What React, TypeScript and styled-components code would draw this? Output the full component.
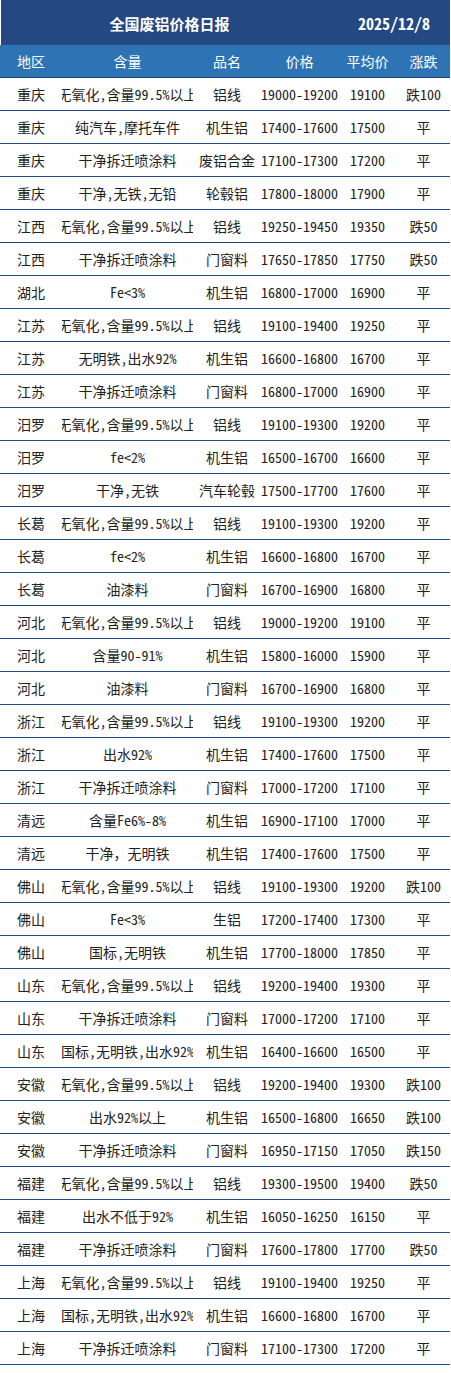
import React from "react";
import styled, { createGlobalStyle } from "styled-components";

const GlobalStyle = createGlobalStyle`
  html, body {
    margin: 0;
    padding: 0;
    background: #ffffff;
  }
  body {
    font-family: "Noto Sans Mono CJK SC", "Noto Sans CJK SC", "Liberation Sans", sans-serif;
  }
`;

const COLS = "62px 131px 68px 77px 59px 53px";

const Sheet = styled.div`
  width: 450px;
  display: flex;
  flex-direction: column;
`;

const TitleBar = styled.div`
  margin-left: 1px;
  height: 45px;
  background: #244882;
  display: grid;
  grid-template-columns: 337px 112px;
  align-items: center;
  color: #ffffff;
  font-weight: 700;
`;

const Title = styled.div`
  text-align: center;
  font-size: 15px;
  font-family: "Noto Sans CJK SC", sans-serif;
  padding-top: 1px;
`;

const DateText = styled.div`
  text-align: center;
  font-size: 16px;
  padding-top: 1px;
`;

const Row = styled.div<{ $head?: boolean }>`
  display: grid;
  grid-template-columns: ${COLS};
  height: 33px;
  box-sizing: border-box;
  border-bottom: 1px solid ${(p) => (p.$head ? "#1f3f78" : "#23467f")};
  background: ${(p) => (p.$head ? "#2e74b5" : "#ffffff")};
  color: ${(p) => (p.$head ? "#ffffff" : "#222222")};
  font-size: 14px;
`;

const Cell = styled.div`
  display: flex;
  align-items: center;
  justify-content: center;
  overflow: hidden;
  white-space: nowrap;
  padding-bottom: 1px;
`;

type Item = [string, string, string, string, string, string];

const rows: Item[] = [
  ["重庆", "无氧化,含量99.5%以上", "铝线", "19000-19200", "19100", "跌100"],
  ["重庆", "纯汽车,摩托车件", "机生铝", "17400-17600", "17500", "平"],
  ["重庆", "干净拆迁喷涂料", "废铝合金", "17100-17300", "17200", "平"],
  ["重庆", "干净,无铁,无铅", "轮毂铝", "17800-18000", "17900", "平"],
  ["江西", "无氧化,含量99.5%以上", "铝线", "19250-19450", "19350", "跌50"],
  ["江西", "干净拆迁喷涂料", "门窗料", "17650-17850", "17750", "跌50"],
  ["湖北", "Fe<3%", "机生铝", "16800-17000", "16900", "平"],
  ["江苏", "无氧化,含量99.5%以上", "铝线", "19100-19400", "19250", "平"],
  ["江苏", "无明铁,出水92%", "机生铝", "16600-16800", "16700", "平"],
  ["江苏", "干净拆迁喷涂料", "门窗料", "16800-17000", "16900", "平"],
  ["汨罗", "无氧化,含量99.5%以上", "铝线", "19100-19300", "19200", "平"],
  ["汨罗", "fe<2%", "机生铝", "16500-16700", "16600", "平"],
  ["汨罗", "干净,无铁", "汽车轮毂", "17500-17700", "17600", "平"],
  ["长葛", "无氧化,含量99.5%以上", "铝线", "19100-19300", "19200", "平"],
  ["长葛", "fe<2%", "机生铝", "16600-16800", "16700", "平"],
  ["长葛", "油漆料", "门窗料", "16700-16900", "16800", "平"],
  ["河北", "无氧化,含量99.5%以上", "铝线", "19000-19200", "19100", "平"],
  ["河北", "含量90-91%", "机生铝", "15800-16000", "15900", "平"],
  ["河北", "油漆料", "门窗料", "16700-16900", "16800", "平"],
  ["浙江", "无氧化,含量99.5%以上", "铝线", "19100-19300", "19200", "平"],
  ["浙江", "出水92%", "机生铝", "17400-17600", "17500", "平"],
  ["浙江", "干净拆迁喷涂料", "门窗料", "17000-17200", "17100", "平"],
  ["清远", "含量Fe6%-8%", "机生铝", "16900-17100", "17000", "平"],
  ["清远", "干净，无明铁", "机生铝", "17400-17600", "17500", "平"],
  ["佛山", "无氧化,含量99.5%以上", "铝线", "19100-19300", "19200", "跌100"],
  ["佛山", "Fe<3%", "生铝", "17200-17400", "17300", "平"],
  ["佛山", "国标,无明铁", "机生铝", "17700-18000", "17850", "平"],
  ["山东", "无氧化,含量99.5%以上", "铝线", "19200-19400", "19300", "平"],
  ["山东", "干净拆迁喷涂料", "门窗料", "17000-17200", "17100", "平"],
  ["山东", "国标,无明铁,出水92%", "机生铝", "16400-16600", "16500", "平"],
  ["安徽", "无氧化,含量99.5%以上", "铝线", "19200-19400", "19300", "跌100"],
  ["安徽", "出水92%以上", "机生铝", "16500-16800", "16650", "跌100"],
  ["安徽", "干净拆迁喷涂料", "门窗料", "16950-17150", "17050", "跌150"],
  ["福建", "无氧化,含量99.5%以上", "铝线", "19300-19500", "19400", "跌50"],
  ["福建", "出水不低于92%", "机生铝", "16050-16250", "16150", "平"],
  ["福建", "干净拆迁喷涂料", "门窗料", "17600-17800", "17700", "跌50"],
  ["上海", "无氧化,含量99.5%以上", "铝线", "19100-19400", "19250", "平"],
  ["上海", "国标,无明铁,出水92%", "机生铝", "16600-16800", "16700", "平"],
  ["上海", "干净拆迁喷涂料", "门窗料", "17100-17300", "17200", "平"],
];

const head = ["地区", "含量", "品名", "价格", "平均价", "涨跌"];

export default function App() {
  return (
    <>
      <GlobalStyle />
      <Sheet>
        <TitleBar>
          <Title>全国废铝价格日报</Title>
          <DateText>2025/12/8</DateText>
        </TitleBar>
        <Row $head>
          {head.map((h) => (
            <Cell key={h}>{h}</Cell>
          ))}
        </Row>
        {rows.map((r, i) => (
          <Row key={i}>
            {r.map((v, j) => (
              <Cell key={j}>
                <span>{v}</span>
              </Cell>
            ))}
          </Row>
        ))}
      </Sheet>
    </>
  );
}
